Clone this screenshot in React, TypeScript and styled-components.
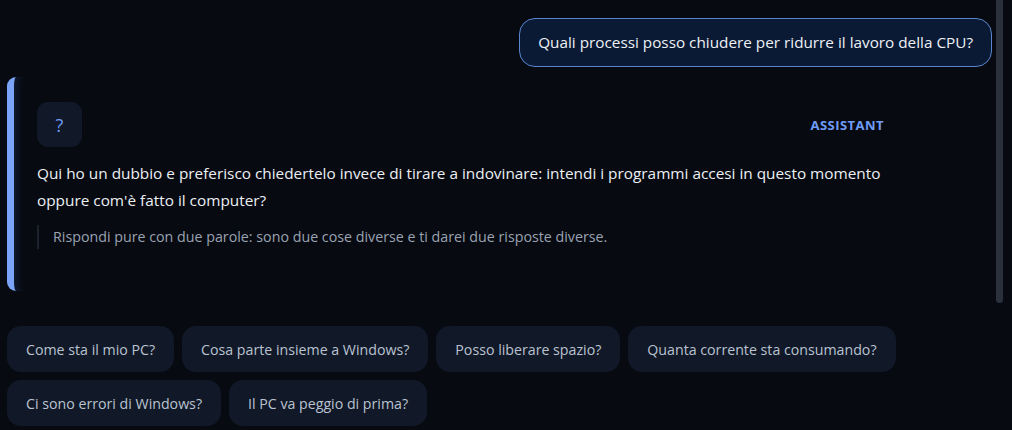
import React from "react";
import styled, { createGlobalStyle } from "styled-components";

const Global = createGlobalStyle`
  html, body { margin: 0; padding: 0; height: 100%; background: #070a11; }
  body { font-family: "Open Sans", "Liberation Sans", sans-serif; color: #e5e9f0; }
  * { box-sizing: border-box; }
`;

const Frame = styled.div`
  position: relative;
  height: 430px;
  overflow: hidden;
`;

const Scroller = styled.div`
  height: 430px;
  overflow-y: auto;
  background: #070a11;
  scrollbar-width: none;
  &::-webkit-scrollbar { display: none; }
`;

const ScrollThumb = styled.div`
  position: absolute;
  top: 0;
  right: 9px;
  width: 7px;
  height: 303px;
  background: #2b313c;
  border-radius: 0 0 4px 4px;
`;

const Content = styled.div`
  display: flex;
  flex-direction: column;
  padding: 18px 20px 184px 7px;
`;

const UserRow = styled.div`
  display: flex;
  justify-content: flex-end;
`;

const UserBubble = styled.div`
  background: #0a1a34;
  border: 1px solid #5a86cf;
  border-radius: 16px;
  padding: 13px 18px;
  font-size: 15.3px;
  line-height: 21px;
  color: #eef1f6;
`;

const Card = styled.div`
  margin-top: 10px;
  width: 904px;
  border-left: 7px solid #7ba4f8;
  border-radius: 9px 0 0 9px;
  padding: 25px 27px 42px 23px;
  box-shadow: inset 10px 0 10px -8px rgba(60, 110, 220, 0.22);
`;

const Header = styled.div`
  display: flex;
  align-items: center;
  justify-content: space-between;
`;

const Avatar = styled.div`
  width: 45px;
  height: 45px;
  border-radius: 11px;
  background: #111827;
  display: flex;
  align-items: center;
  justify-content: center;
  color: #6f9cf6;
  font-size: 18px;
`;

const Role = styled.div`
  font-size: 13px;
  font-weight: 700;
  letter-spacing: 0.035em;
  color: #6f9cf6;
  text-transform: uppercase;
`;

const Body = styled.p`
  margin: 13px 0 0;
  font-size: 15.35px;
  line-height: 27px;
  color: #eceff4;
`;

const Quote = styled.div`
  margin-top: 11px;
  border-left: 2px solid #1c212b;
  padding: 2px 0 2px 14px;
  font-size: 14.25px;
  line-height: 20px;
  color: #9aa3b1;
`;

const Chips = styled.div`
  margin-top: 35px;
  display: flex;
  flex-wrap: wrap;
  gap: 8px 8px;
`;

const Chip = styled.button`
  height: 46px;
  padding: 0 19px;
  border: none;
  border-radius: 14px;
  background: #111827;
  color: #b9c3d1;
  font-family: inherit;
  font-size: 14.2px;
  cursor: pointer;
`;

const chips = [
  "Come sta il mio PC?",
  "Cosa parte insieme a Windows?",
  "Posso liberare spazio?",
  "Quanta corrente sta consumando?",
  "Ci sono errori di Windows?",
  "Il PC va peggio di prima?",
];

export default function App() {
  return (
    <>
      <Global />
      <Frame>
        <Scroller>
          <Content>
            <UserRow>
              <UserBubble>Quali processi posso chiudere per ridurre il lavoro della CPU?</UserBubble>
            </UserRow>
            <Card>
              <Header>
                <Avatar>?</Avatar>
                <Role>Assistant</Role>
              </Header>
              <Body>
                Qui ho un dubbio e preferisco chiedertelo invece di tirare a indovinare: intendi i programmi accesi in questo momento oppure com'è fatto il computer?
              </Body>
              <Quote>Rispondi pure con due parole: sono due cose diverse e ti darei due risposte diverse.</Quote>
            </Card>
            <Chips>
              {chips.map((c) => (
                <Chip key={c}>{c}</Chip>
              ))}
            </Chips>
          </Content>
        </Scroller>
        <ScrollThumb />
      </Frame>
    </>
  );
}
